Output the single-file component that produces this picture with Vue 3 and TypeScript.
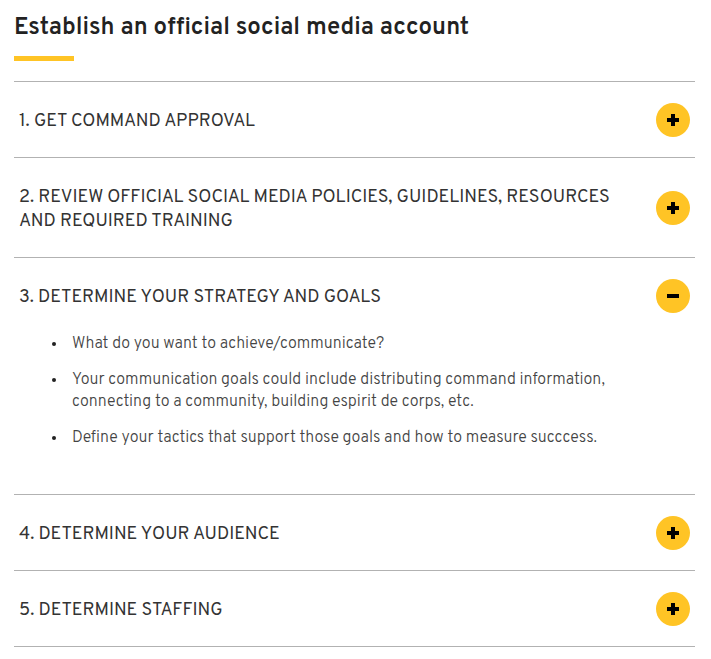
<script setup lang="ts">
import { ref } from 'vue'

interface Step {
  id: number
  title: string
  points: string[]
}

const steps: Step[] = [
  { id: 1, title: 'Get command approval', points: [] },
  { id: 2, title: 'Review official social media policies, guidelines, resources and required training', points: [] },
  {
    id: 3,
    title: 'Determine your strategy and goals',
    points: [
      'What do you want to achieve/communicate?',
      'Your communication goals could include distributing command information, connecting to a community, building espirit de corps, etc.',
      'Define your tactics that support those goals and how to measure succcess.',
    ],
  },
  { id: 4, title: 'Determine your audience', points: [] },
  { id: 5, title: 'Determine staffing', points: [] },
]

const openId = ref<number | null>(3)

function toggle(id: number): void {
  openId.value = openId.value === id ? null : id
}
</script>

<template>
  <main class="page">
    <h1 class="title">Establish an official social media account</h1>
    <div class="accordion">
      <section v-for="step in steps" :key="step.id" class="item">
        <h2 class="heading">
          <button
            class="toggle"
            type="button"
            :aria-expanded="openId === step.id"
            @click="toggle(step.id)"
          >
            <span class="label">{{ step.id }}. {{ step.title }}</span>
            <svg class="icon" viewBox="0 0 34 34" aria-hidden="true">
              <circle cx="17" cy="17" r="17" fill="#ffc425" />
              <path v-if="openId === step.id" d="M11 15h12v4H11z" />
              <path v-else d="M15 11h4v4h4v4h-4v4h-4v-4h-4v-4h4z" />
            </svg>
          </button>
        </h2>
        <ul v-if="openId === step.id && step.points.length" class="points">
          <li v-for="point in step.points" :key="point" class="point">{{ point }}</li>
        </ul>
      </section>
    </div>
  </main>
</template>

<style>
body {
  margin: 0;
  background: #fff;
}
</style>

<style scoped>
.page {
  padding: 10px 16px 12px 14px;
  font-family: Overpass, Roboto, "Liberation Sans", sans-serif;
  color: #222;
}

.title {
  margin: 0;
  font-size: 24px;
  line-height: 36px;
  font-weight: 600;
}

.title::after {
  content: "";
  display: block;
  width: 60px;
  height: 5px;
  margin: 10px 0 20px;
  background: #ffc425;
}

.accordion {
  border-top: 1px solid #b2b2b2;
}

.item {
  border-bottom: 1px solid #b2b2b2;
}

.heading {
  margin: 0;
}

.toggle {
  display: flex;
  align-items: center;
  justify-content: space-between;
  gap: 32px;
  width: 100%;
  padding: 21px 5px 20px;
  border: 0;
  background: none;
  color: #333;
  font: 400 18px/24px Overpass, Roboto, "Liberation Sans", sans-serif;
  text-align: left;
  text-transform: uppercase;
  cursor: pointer;
}

.label {
  padding: 7px 0 3px;
}

.icon {
  flex: none;
  width: 34px;
  height: 34px;
}

.points {
  display: flex;
  flex-direction: column;
  gap: 14px;
  margin: 0;
  padding: 0 68px 45px 38px;
  list-style: none;
  color: #444;
  font-size: 16px;
  line-height: 22px;
  font-weight: 300;
}

.point {
  display: flex;
  gap: 16px;
}

.point::before {
  content: "";
  flex: none;
  width: 4px;
  height: 4px;
  margin-top: 9px;
  border-radius: 50%;
  background: #222;
}
</style>
